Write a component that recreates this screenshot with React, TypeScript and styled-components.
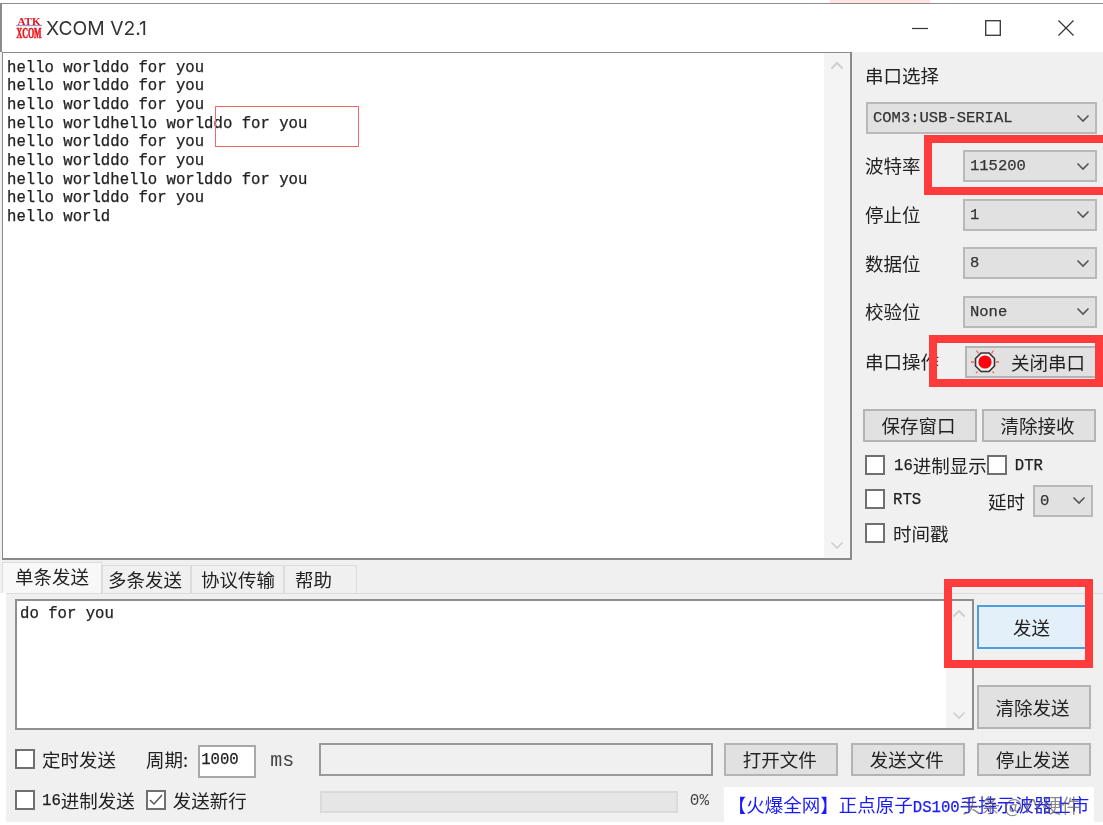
import * as React from "react";
import styled, {createGlobalStyle} from "styled-components";

const CJK = `"Noto Sans CJK SC", "Noto Sans", sans-serif`;
const MONO = `"Liberation Mono", "Noto Sans CJK SC", monospace`;

const LOG_LINES = [
	"hello worlddo for you",
	"hello worlddo for you",
	"hello worlddo for you",
	"hello worldhello worlddo for you",
	"hello worlddo for you",
	"hello worlddo for you",
	"hello worldhello worlddo for you",
	"hello worlddo for you",
	"hello world",
];

const GlobalStyle = createGlobalStyle`
	html, body {
		margin: 0;
		padding: 0;
		background: #fff;
	}
`;

const Page = styled.div`
	position: relative;
	width: 1103px;
	height: 825px;
	overflow: hidden;
	background: #f0f0f0;
	font-family: ${CJK};
	font-size: 18.5px;
	color: #222;
	filter: blur(0.4px);
	* {
		box-sizing: border-box;
	}
`;

const TopStrip = styled.div`
	position: relative;
	height: 4px;
	background: #fff;
	border-bottom: 1px solid #8c8c8c;
`;

const PinkMark = styled.div`
	position: absolute;
	left: 830px;
	top: 0;
	width: 100px;
	height: 3px;
	background: #fde4e2;
`;

const TitleBar = styled.div`
	height: 48px;
	background: #fff;
	display: flex;
	align-items: center;
	padding: 0 0 0 14px;
	border-left: 2px solid #8c8c8c;
`;

const Title = styled.span`
	font-family: "Inter", "Liberation Sans", sans-serif;
	font-size: 19.3px;
	color: #333;
	margin-left: 4px;
	flex: 1;
`;

const WinButtons = styled.div`
	display: flex;
	align-items: center;
	gap: 57px;
	padding-right: 29px;
`;

const Main = styled.div`
	display: flex;
	height: 508px;
	padding-left: 2px;
`;

const MonoText = styled.span`
	font-family: ${MONO};
	font-size: 15.65px;
	vertical-align: 3px;
	-webkit-text-stroke: 0.25px #222;
`;

const LogBox = styled.div`
	position: relative;
	flex: none;
	width: 850px;
	height: 508px;
	background: #fff;
	border: 2px solid #8a8a8a;
	border-width: 1px 2px 2px 1px;
	padding: 5.5px 0 0 4px;
	font-family: ${MONO};
	font-size: 15.65px;
	line-height: 18.7px;
	-webkit-text-stroke: 0.25px #222;
	color: #222;
	white-space: pre;
`;

const ScrollTrack = styled.div`
	position: absolute;
	top: 0;
	right: 0;
	bottom: 0;
	width: 26px;
	background: #f4f4f4;
	display: flex;
	flex-direction: column;
	justify-content: space-between;
	align-items: center;
	padding: 8px 0;
`;

const SideHint = styled.div`
	position: absolute;
	left: 212px;
	top: 53px;
	width: 144px;
	height: 41px;
	border: 1px solid #f06a6a;
`;

const Side = styled.div`
	flex: 1;
	padding: 10px 0 0 11px;
	display: flex;
	flex-direction: column;
`;

const SideHeading = styled.div`
	height: 26px;
	line-height: 26px;
	margin-left: 2px;
`;

const SideRow = styled.div<{$h?: number; $mt?: number}>`
	display: flex;
	align-items: center;
	justify-content: space-between;
	height: ${p => p.$h ?? 32}px;
	margin-top: ${p => p.$mt ?? 16.67}px;
	padding: 0 6px 0 2px;
	& > :only-child {
		margin-left: auto;
	}
`;

const RowLabel = styled.span`
	line-height: 1;
	padding-bottom: 1px;
	white-space: nowrap;
`;

const Select = styled.div<{$w: number; $ml?: number; $mt?: number}>`
	width: ${p => p.$w}px;
	height: 32px;
	flex: none;
	margin: ${p => p.$mt ?? 0}px 0 0 ${p => p.$ml ?? 0}px;
	background: #e1e1e1;
	border: 2px solid #b9b9b9;
	display: flex;
	align-items: center;
	justify-content: space-between;
	padding: 0 5px;
	font-family: ${MONO};
	font-size: 15.5px;
	-webkit-text-stroke: 0.25px #333;
	color: #333;
`;

const Button = styled.div<{$w: number; $h?: number; $active?: boolean; $ml?: number}>`
	width: ${p => p.$w}px;
	height: ${p => p.$h ?? 33}px;
	flex: none;
	margin-left: ${p => p.$ml ?? 0}px;
	padding-right: 3px;
	background: ${p => (p.$active ? "#e3f0fa" : "#e1e1e1")};
	border: 2px solid ${p => (p.$active ? "#4a9fe0" : "#b4b4b4")};
	display: flex;
	align-items: center;
	justify-content: center;
	color: #222;
`;

const LampButton = styled(Button)`
	justify-content: flex-start;
	padding: 0 0 0 3px;
	gap: 11px;
`;

const ButtonRow = styled.div`
	display: flex;
	gap: 5px;
	margin-top: 31px;
`;

const CheckRow = styled.div<{$mt?: number}>`
	display: flex;
	align-items: center;
	height: 34px;
	margin: ${p => p.$mt ?? 0}px 0 0 2px;
	padding-right: 10px;
`;

const Box = styled.span<{$ml?: number}>`
	width: 20px;
	height: 20px;
	flex: none;
	margin-left: ${p => p.$ml ?? 0}px;
	background: #fff;
	border: 2px solid #707070;
	display: inline-flex;
	align-items: center;
	justify-content: center;
`;

const Label = styled.span<{$ml?: number}>`
	margin-left: ${p => p.$ml ?? 7}px;
	white-space: nowrap;
`;

const DelayLabel = styled.span`
	margin: 4px 0 0 auto;
`;

const Tabs = styled.div`
	display: flex;
	align-items: flex-end;
	height: 33px;
	padding-left: 2px;
`;

const Tab = styled.div<{$on?: boolean; $w: number; $pad: number}>`
	height: ${p => (p.$on ? 31 : 28)}px;
	padding-left: ${p => p.$pad}px;
	width: ${p => p.$w}px;
	background: ${p => (p.$on ? "#f8f8f8" : "#f0f0f0")};
	border: 1px solid #dcdcdc;
	border-bottom: none;
	line-height: ${p => (p.$on ? 26 : 27)}px;
	white-space: nowrap;
`;

const Lower = styled.div`
	position: relative;
	height: 232px;
	background: #fff;
`;

const LowerBody = styled.div`
	position: absolute;
	inset: 0 0 3px 6px;
	background: #f0f0f0;
	border-top: 1px solid #dcdcdc;
	padding: 5px 0 0 9px;
	display: flex;
	flex-direction: column;
`;

const SendRow = styled.div`
	display: flex;
	height: 131px;
`;

const SendBox = styled.div`
	position: relative;
	width: 959px;
	height: 131px;
	background: #fff;
	border: 2px solid #8f8f8f;
	padding: 4px 0 0 3px;
	font-family: ${MONO};
	font-size: 15.65px;
	line-height: 18px;
	-webkit-text-stroke: 0.25px #222;
`;

const SendActions = styled.div`
	display: flex;
	flex-direction: column;
	justify-content: space-between;
	margin-left: 3px;
	padding-top: 6px;
	height: 130px;
`;

const BottomRow = styled.div`
	display: flex;
	align-items: center;
	margin-top: 11px;
	height: 36px;
`;

const BottomRowLow = styled(BottomRow)`
	margin-top: 7px;
	height: 32px;
`;

const PeriodLabel = styled.span`
	margin-left: 30px;
`;

const NumInput = styled.div`
	width: 58px;
	height: 33px;
	flex: none;
	margin: 4px 0 0 10px;
	background: #fff;
	border: 2px solid #a8a8a8;
	font-family: ${MONO};
	font-size: 15.65px;
	-webkit-text-stroke: 0.25px #222;
	line-height: 27px;
	padding-left: 1px;
`;

const Unit = styled.span`
	font-family: ${MONO};
	font-size: 20px;
	margin: 3px 0 0 14px;
	width: 24px;
	flex: none;
	color: #444;
`;

const FileField = styled.div`
	width: 394px;
	height: 33px;
	flex: none;
	border: 2px solid #9a9a9a;
	margin-left: 25px;
`;

const Progress = styled.div`
	width: 358px;
	height: 22px;
	flex: none;
	background: #e6e6e6;
	border: 2px solid #dadada;
	margin: 4px 0 0 73px;
`;

const Percent = styled.span`
	font-family: ${MONO};
	font-size: 16px;
	width: 20px;
	flex: none;
	margin: 2px 0 0 12px;
	color: #444;
`;

const Ad = styled.div`
	flex: none;
	align-self: flex-start;
	width: 370px;
	height: 35px;
	margin: 3px 0 0 14px;
	background: #fff;
	color: #1a1aff;
	line-height: 35px;
	white-space: nowrap;
	padding-left: 4px;
	overflow: hidden;
`;

const AdMono = styled.span`
	font-family: ${MONO};
	font-size: 15.65px;
	-webkit-text-stroke: 0.25px #1a1aff;
`;

const Watermark = styled.div`
	position: absolute;
	left: 962px;
	top: 791px;
	font-size: 19px;
	color: rgba(90, 90, 90, 0.7);
	white-space: nowrap;
`;

const RedFrame = styled.div<{$x: number; $y: number; $w: number; $h: number}>`
	position: absolute;
	left: ${p => p.$x}px;
	top: ${p => p.$y}px;
	width: ${p => p.$w}px;
	height: ${p => p.$h}px;
	border: 8px solid #ff3b3b;
`;

const Chevron = ({color = "#555"}: {color?: string}) => (
	<svg width="14" height="9" viewBox="0 0 14 9" fill="none">
		<path d="M1.5 1.5 L7 7 L12.5 1.5" stroke={color} strokeWidth="1.6" />
	</svg>
);

const ChevronUp = ({color = "#cfcfcf"}: {color?: string}) => (
	<svg width="14" height="9" viewBox="0 0 14 9" fill="none">
		<path d="M1.5 7.5 L7 2 L12.5 7.5" stroke={color} strokeWidth="2" />
	</svg>
);

const Logo = () => (
	<svg width="26" height="24" viewBox="0 0 26 24">
		<text x="13" y="8.5" textAnchor="middle" fontFamily="Liberation Serif" fontWeight="700" fontSize="11" fill="#e8121a">ATK</text>
		<rect x="0" y="9" width="26" height="1.2" fill="#9a9ad0" />
		<g transform="translate(13 22) scale(0.57 1)">
			<text textAnchor="middle" fontFamily="Liberation Serif" fontWeight="700" fontSize="14" stroke="#f01018" strokeWidth="0.6" fill="#f01018">XCOM</text>
		</g>
	</svg>
);

const Lamp = () => (
	<svg width="30" height="30" viewBox="0 0 30 30" fill="none">
		<path d="M11 6h8l5.5 5.5v7.5l-5.5 5.5h-8l-5.5-5.5v-7.5z" fill="#f0f0f0" stroke="#333" strokeWidth="1.6" />
		<circle cx="15" cy="15" r="6.6" fill="#ff0010" />
		<path d="M1 15h3M26 15h3M6.5 3.5l2 3M23.5 3.5l-2 3M6 26l1.5-1.5M24 26l-1.5-1.5" stroke="#ff5a5a" strokeWidth="1.3" />
	</svg>
);

const App = () => {
	return (
		<Page>
			<GlobalStyle />
			<TopStrip><PinkMark /></TopStrip>
			<TitleBar>
				<Logo />
				<Title>XCOM V2.1</Title>
				<WinButtons>
					<svg width="16" height="16" viewBox="0 0 16 16"><path d="M0 8.5h16" stroke="#333" strokeWidth="1.2" /></svg>
					<svg width="16" height="16" viewBox="0 0 16 16" fill="none"><rect x=".7" y=".7" width="14.6" height="14.6" stroke="#333" strokeWidth="1.3" /></svg>
					<svg width="16" height="16" viewBox="0 0 16 16"><path d="M.5.5l15 15M15.5.5l-15 15" stroke="#333" strokeWidth="1.2" /></svg>
				</WinButtons>
			</TitleBar>
			<Main>
				<LogBox>
					{LOG_LINES.join("\n")}
					<SideHint />
					<ScrollTrack>
						<ChevronUp />
						<Chevron color="#cfcfcf" />
					</ScrollTrack>
				</LogBox>
				<Side>
					<SideHeading>串口选择</SideHeading>
					<SideRow $mt={14}>
						<Select $w={231}>COM3:USB-SERIAL<Chevron /></Select>
					</SideRow>
					<SideRow $mt={16}><RowLabel>波特率</RowLabel><Select $w={134}>115200<Chevron /></Select></SideRow>
					<SideRow><RowLabel>停止位</RowLabel><Select $w={134}>1<Chevron /></Select></SideRow>
					<SideRow><RowLabel>数据位</RowLabel><Select $w={134}>8<Chevron /></Select></SideRow>
					<SideRow><RowLabel>校验位</RowLabel><Select $w={134}>None<Chevron /></Select></SideRow>
					<SideRow $mt={18}><RowLabel>串口操作</RowLabel><LampButton $w={132} $h={32}><Lamp />关闭串口</LampButton></SideRow>
					<ButtonRow>
						<Button $w={114}>保存窗口</Button>
						<Button $w={114}>清除接收</Button>
					</ButtonRow>
					<CheckRow $mt={6}>
						<Box /><Label $ml={9}><MonoText>16</MonoText>进制显示</Label>
						<Box /><Label $ml={8}><MonoText>DTR</MonoText></Label>
					</CheckRow>
					<CheckRow>
						<Box /><Label $ml={8}><MonoText>RTS</MonoText></Label>
						<DelayLabel>延时</DelayLabel>
						<Select $w={60} $ml={8} $mt={4}>0<Chevron /></Select>
					</CheckRow>
					<CheckRow><Box /><Label $ml={8}>时间戳</Label></CheckRow>
				</Side>
			</Main>
			<Tabs>
				<Tab $on $w={100} $pad={12}>单条发送</Tab>
				<Tab $w={89} $pad={5}>多条发送</Tab>
				<Tab $w={93} $pad={9}>协议传输</Tab>
				<Tab $w={73} $pad={10}>帮助</Tab>
			</Tabs>
			<Lower>
				<LowerBody>
					<SendRow>
						<SendBox>
							do for you
							<ScrollTrack>
								<ChevronUp />
								<Chevron color="#cfcfcf" />
							</ScrollTrack>
						</SendBox>
						<SendActions>
							<Button $w={112} $h={44} $active>发送</Button>
							<Button $w={114} $h={44}>清除发送</Button>
						</SendActions>
					</SendRow>
					<BottomRow>
						<Box /><Label>定时发送</Label>
						<PeriodLabel>周期:</PeriodLabel>
						<NumInput>1000</NumInput>
						<Unit>ms</Unit>
						<FileField />
						<Button $w={114} $ml={11}>打开文件</Button>
						<Button $w={114} $ml={13}>发送文件</Button>
						<Button $w={114} $ml={12}>停止发送</Button>
					</BottomRow>
					<BottomRowLow>
						<Box /><Label><MonoText>16</MonoText>进制发送</Label>
						<Box $ml={11}>
							<svg width="14" height="12" viewBox="0 0 14 12" fill="none"><path d="M1 6l4 4 8-9" stroke="#555" strokeWidth="1.5" /></svg>
						</Box>
						<Label>发送新行</Label>
						<Progress />
						<Percent>0%</Percent>
						<Ad>【火爆全网】正点原子<AdMono>DS100</AdMono>手持示波器上市</Ad>
					</BottomRowLow>
				</LowerBody>
			</Lower>
			<RedFrame $x={924} $y={135} $w={190} $h={60} />
			<RedFrame $x={929} $y={335} $w={174} $h={52} />
			<RedFrame $x={944} $y={579} $w={149} $h={89} />
			<Watermark>头条 @YY硬件</Watermark>
		</Page>
	);
};

export default App;
